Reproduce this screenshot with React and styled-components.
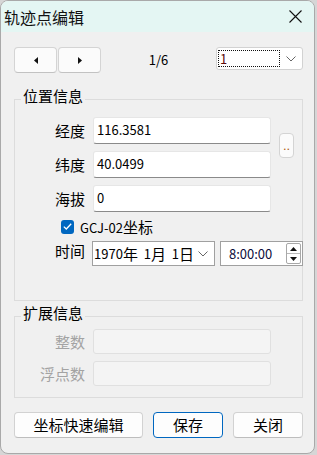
import React from "react";
import styled, { createGlobalStyle } from "styled-components";

const GlobalStyle = createGlobalStyle`
  html, body {
    margin: 0;
    padding: 0;
    background: #d6d6d6;
  }
  body {
    font-family: "Noto Sans CJK SC", "Liberation Sans", sans-serif;
    font-size: 13px;
    color: #000;
  }
  * {
    box-sizing: border-box;
  }
`;

const Window = styled.div`
  width: 315px;
  height: 454px;
  background: #f0f0f0;
  border: 1px solid #a9a9a9;
  border-radius: 8px;
  overflow: hidden;
  display: flex;
  flex-direction: column;
`;

const TitleBar = styled.div`
  height: 31px;
  flex: none;
  background: #e4f6f3;
  display: flex;
  align-items: center;
  justify-content: space-between;
  padding: 0 12px 0 3px;
`;

const TitleText = styled.div`
  font-size: 16px;
  line-height: 20px;
  color: #111;
`;

const Body = styled.div`
  padding: 0 11px 0 13px;
  display: flex;
  flex-direction: column;
`;

const NavRow = styled.div`
  margin-top: 15px;
  display: flex;
  align-items: center;
  height: 26px;
`;

const NavButton = styled.button`
  width: 43px;
  height: 26px;
  margin: 0 1px 0 0;
  padding: 0;
  background: #fbfbfb;
  border: 1px solid #d4d4d4;
  border-bottom-color: #c2c2c2;
  border-radius: 4px;
  display: flex;
  align-items: center;
  justify-content: center;
`;

const Counter = styled.div`
  flex: 1;
  text-align: center;
  line-height: 20px;
  padding-right: 1px;
`;

const Combo = styled.div`
  width: 87px;
  height: 23px;
  margin-top: -3px;
  background: #fff;
  border: 1px solid #d2d2d2;
  border-radius: 3px;
  display: flex;
  align-items: center;
  padding: 0 4px 0 1px;
`;

const FocusBox = styled.div`
  width: 62px;
  height: 17px;
  border: 1px dotted #111;
  color: #5c0a0a;
  line-height: 15px;
  padding-left: 1px;
`;

const ChevronWrap = styled.div`
  flex: 1;
  display: flex;
  justify-content: flex-end;
  padding-right: 2px;
`;

const Group = styled.div`
  margin-top: ${({ $top }) => $top}px;
  border: 1px solid #dcdcdc;
  padding-bottom: ${({ $bottom }) => $bottom}px;
`;

const GroupTitle = styled.div`
  width: fit-content;
  margin: -14px 0 0 6px;
  padding: 0 2px;
  background: #f0f0f0;
  font-size: 15px;
  line-height: 20px;
`;

const FieldGrid = styled.div`
  margin-top: ${({ $top }) => $top}px;
  display: grid;
  grid-template-columns: 70px 178px 15px;
  grid-auto-rows: ${({ $row }) => $row}px;
  column-gap: 8px;
  row-gap: 7px;
`;

const Label = styled.div`
  grid-column: 1;
  text-align: right;
  font-size: 15px;
  line-height: ${({ $h }) => $h || 27}px;
  color: ${({ $disabled }) => ($disabled ? "#a3a3a3" : "#000")};
`;

const TextBox = styled.div`
  grid-column: 2;
  background: ${({ $disabled }) => ($disabled ? "#f4f4f4" : "#fff")};
  border: 1px solid ${({ $disabled }) => ($disabled ? "#e0e0e0" : "#e6e6e6")};
  border-bottom-color: ${({ $disabled }) => ($disabled ? "#e0e0e0" : "#8a8a8a")};
  border-radius: 3px;
  padding: 0 3px;
  line-height: 24px;
  font-size: 13px;
`;

const DotsButton = styled.button`
  grid-column: 3;
  grid-row: 1 / span 2;
  align-self: center;
  width: 15px;
  height: 25px;
  margin-top: -4px;
  padding: 0;
  background: #fbfbfb;
  border: 1px solid #d4d4d4;
  border-radius: 4px;
  color: #b05a10;
  font-size: 13px;
  line-height: 18px;
  font-family: "Liberation Sans", sans-serif;
`;

const CheckRow = styled.div`
  margin: 7px 0 0 46px;
  display: flex;
  align-items: center;
  gap: 6px;
  height: 15px;
`;

const CheckBox = styled.div`
  width: 13px;
  height: 14px;
  border-radius: 3px;
  background: #0067c0;
  display: flex;
  align-items: center;
  justify-content: center;
`;

const CheckLabel = styled.div`
  line-height: 15px;
  white-space: nowrap;
`;

const TimeRow = styled.div`
  margin-top: 7px;
  display: grid;
  grid-template-columns: 70px 123px 81px;
  column-gap: 7px;
  height: 25px;
`;

const DateBox = styled.div`
  background: #fff;
  border: 1px solid #a0a0a0;
  display: flex;
  align-items: center;
  padding: 0 4px 0 1px;
  line-height: 23px;
  white-space: pre;
`;

const TimeBox = styled.div`
  margin-left: -2px;
  background: #fff;
  border: 1px solid #a0a0a0;
  display: flex;
  align-items: center;
  padding: 0 1px 0 8px;
  color: #0b0b3a;
`;

const TimeText = styled.div`
  flex: 1;
  line-height: 23px;
`;

const Spin = styled.div`
  width: 15px;
  height: 21px;
  border: 1px solid #a8a8a8;
  border-radius: 2px;
  display: flex;
  flex-direction: column;
`;

const SpinHalf = styled.div`
  flex: 1;
  display: flex;
  align-items: center;
  justify-content: center;
  border-top: ${({ $lower }) => ($lower ? "1px solid #b8b8b8" : "none")};
`;

const ButtonRow = styled.div`
  margin-top: 14px;
  display: flex;
  justify-content: space-between;
`;

const PushButton = styled.button`
  width: ${({ $w }) => $w}px;
  height: 26px;
  padding: 0;
  background: #fdfdfd;
  border: 1px solid ${({ $default }) => ($default ? "#0067c0" : "#d2d2d2")};
  border-bottom-color: ${({ $default }) => ($default ? "#0067c0" : "#bdbdbd")};
  border-radius: 4px;
  font-family: "Noto Sans CJK SC", sans-serif;
  font-size: 15px;
  line-height: 22px;
  color: #000;
`;

const Cjk = styled.span`
  font-size: 15px;
`;

// Latin text is drawn smaller than CJK, as the Windows dialog font does
const Txt = ({ children }) => {
  const parts = String(children).split(/([\u3000-\u9fff]+)/);
  return parts.map((p, i) =>
    /[\u3000-\u9fff]/.test(p) ? <Cjk key={i}>{p}</Cjk> : <span key={i}>{p}</span>
  );
};

const Tri = ({ dir, w = 4, h = 7 }) => {
  const pts = {
    left: `${w},0 ${w},${h} 0,${h / 2}`,
    right: `0,0 0,${h} ${w},${h / 2}`,
    up: `0,${h} ${w},${h} ${w / 2},0`,
    down: `0,0 ${w},0 ${w / 2},${h}`,
  }[dir];
  return (
    <svg width={w} height={h} viewBox={`0 0 ${w} ${h}`}>
      <polygon points={pts} fill="#111" />
    </svg>
  );
};

const Chevron = ({ color = "#555" }) => (
  <svg width="10" height="6" viewBox="0 0 10 6">
    <polyline points="0.5,0.5 5,5 9.5,0.5" fill="none" stroke={color} strokeWidth="1" />
  </svg>
);

export default function App() {
  return (
    <>
      <GlobalStyle />
      <Window>
        <TitleBar>
          <TitleText>轨迹点编辑</TitleText>
          <svg width="13" height="13" viewBox="0 0 13 13">
            <path d="M0.5 0.5 L12.5 12.5 M12.5 0.5 L0.5 12.5" stroke="#111" strokeWidth="1.1" />
          </svg>
        </TitleBar>
        <Body>
          <NavRow>
            <NavButton><Tri dir="left" /></NavButton>
            <NavButton><Tri dir="right" /></NavButton>
            <Counter>1/6</Counter>
            <Combo>
              <FocusBox>1</FocusBox>
              <ChevronWrap><Chevron color="#666" /></ChevronWrap>
            </Combo>
          </NavRow>

          <Group $top={26} $bottom={34}>
            <GroupTitle>位置信息</GroupTitle>
            <FieldGrid $top={11} $row={27}>
              <Label>经度</Label>
              <TextBox>116.3581</TextBox>
              <DotsButton>..</DotsButton>
              <Label>纬度</Label>
              <TextBox>40.0499</TextBox>
              <Label>海拔</Label>
              <TextBox>0</TextBox>
            </FieldGrid>
            <CheckRow>
              <CheckBox>
                <svg width="9" height="7" viewBox="0 0 9 7">
                  <polyline points="0.8,3.6 3.3,6 8.2,0.8" fill="none" stroke="#fff" strokeWidth="1.3" />
                </svg>
              </CheckBox>
              <CheckLabel><Txt>GCJ-02坐标</Txt></CheckLabel>
            </CheckRow>
            <TimeRow>
              <Label $h={20}>时间</Label>
              <DateBox>
                <Txt>{"1970年  1月  1日"}</Txt>
                <ChevronWrap><Chevron color="#666" /></ChevronWrap>
              </DateBox>
              <TimeBox>
                <TimeText>8:00:00</TimeText>
                <Spin>
                  <SpinHalf><Tri dir="up" w={7} h={4} /></SpinHalf>
                  <SpinHalf $lower><Tri dir="down" w={7} h={4} /></SpinHalf>
                </Spin>
              </TimeBox>
            </TimeRow>
          </Group>

          <Group $top={15} $bottom={11}>
            <GroupTitle>扩展信息</GroupTitle>
            <FieldGrid $top={6} $row={25}>
              <Label $disabled $h={25}>整数</Label>
              <TextBox $disabled />
              <Label $disabled $h={25}>浮点数</Label>
              <TextBox $disabled />
            </FieldGrid>
          </Group>

          <ButtonRow>
            <PushButton $w={129}>坐标快速编辑</PushButton>
            <PushButton $w={70} $default>保存</PushButton>
            <PushButton $w={70}>关闭</PushButton>
          </ButtonRow>
        </Body>
      </Window>
    </>
  );
}
